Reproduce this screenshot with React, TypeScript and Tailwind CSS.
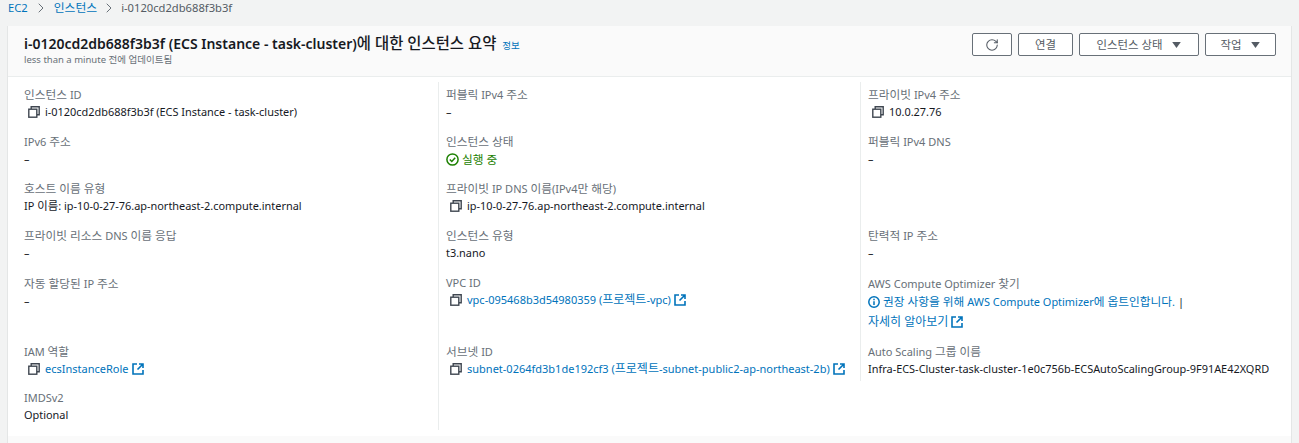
import React from 'react';
import { ChevronRight, RotateCw } from 'lucide-react';

const FONT = 'font-["Noto_Sans","Noto_Sans_CJK_KR",sans-serif]';

// hangul runs are set a bit larger than the latin text around them
const T = ({ text, ko = 'text-[11.7px]' }: { text: string; ko?: string }) => (
  <span>
    {text.split(/([가-힣]+(?: [가-힣]+)*)/).map((part, i) =>
      i % 2 === 1 ? <span key={i} className={ko}>{part}</span> : part
    )}
  </span>
);

const CopyIcon = () => (
  <svg width="12" height="12" viewBox="0 0 12 12" fill="none" stroke="#3f4650" strokeWidth="1.4" className="shrink-0">
    <rect x="0.8" y="3.2" width="8" height="8" />
    <path d="M3.2 3V0.8H11.2V8.8H9" />
  </svg>
);

const ExternalIcon = () => (
  <svg width="12" height="12" viewBox="0 0 12 12" fill="none" stroke="#0073bb" strokeWidth="1.6" className="ml-[3px] shrink-0">
    <path d="M5 1H1V11H11V7" />
    <path d="M7 1H11V5M11 1L5.5 6.5" />
  </svg>
);

const Field = ({ label, h, children }: { label: string; h: string; children: React.ReactNode }) => (
  <div className={h}>
    <div className="text-[11px] leading-[16px] text-[#687078]"><T text={label} /></div>
    <div className="mt-[1px] flex items-center text-[10.93px] leading-[16px] text-[#16191f]">{children}</div>
  </div>
);

const Copy = ({ children }: { children: React.ReactNode }) => (
  <>
    <span className="ml-[4px] mr-[5px]"><CopyIcon /></span>
    {children}
  </>
);

const Link = ({ text }: { text: string }) => (
  <span className="flex items-center text-[11px] text-[#0073bb]">
    <T text={text} ko="text-[12px]" />
    <ExternalIcon />
  </span>
);

const Btn = ({ className, children }: { className: string; children: React.ReactNode }) => (
  <div className={`flex h-[23px] items-center justify-center gap-[10px] rounded-[2px] border border-[#687078] bg-white text-[11.4px] text-[#545b64] ${className}`}>
    {children}
  </div>
);

const Caret = () => (
  <svg width="9" height="6" viewBox="0 0 10 7" fill="#545b64"><path d="M0 0H10L5 7Z" /></svg>
);

export default function App() {
  return (
    <div className={`h-[443px] w-[1299px] overflow-hidden bg-[#f2f3f3] ${FONT}`}>
      <div className="flex h-[26px] items-start pl-2 text-[11.2px] leading-[15px]">
        <span className="text-[#0073bb]">EC2</span>
        <ChevronRight className="mx-[5px] h-[16px] w-[16px] text-[#687078]" strokeWidth={1.5} />
        <span className="text-[11.8px] text-[#0073bb]">인스턴스</span>
        <ChevronRight className="mx-[4px] h-[16px] w-[16px] text-[#687078]" strokeWidth={1.5} />
        <span className="text-[#545b64]">i-0120cd2db688f3b3f</span>
      </div>

      <div className="ml-[7px] w-[1285px] border-x border-[#e4e6e6] bg-white">
        <div className="flex h-[51px] items-start justify-between border-b border-[#eaeded] bg-[#fafafa] pl-[16px] pr-[15px]">
          <div className="pt-[8px]">
            <div className="flex items-baseline">
              <span className="text-[14px] leading-[20px] font-semibold text-[#16191f]">
                <T text="i-0120cd2db688f3b3f (ECS Instance - task-cluster)에 대한 인스턴스 요약" ko="text-[15.4px] font-medium" />
              </span>
              <span className="ml-[6px] text-[9.5px] text-[#0073bb]">정보</span>
            </div>
            <div className="-mt-[1px] text-[9.5px] leading-[14px] text-[#687078]">less than a minute 전에 업데이트됨</div>
          </div>
          <div className="flex gap-[6px] pt-[7px]">
            <Btn className="w-[40px]"><RotateCw className="h-[14px] w-[14px]" strokeWidth={1.8} /></Btn>
            <Btn className="w-[55px]">연결</Btn>
            <Btn className="w-[120px]">인스턴스 상태 <Caret /></Btn>
            <Btn className="w-[71px]">작업 <Caret /></Btn>
          </div>
        </div>

        <div className="flex h-[359px] items-stretch pt-[5px]">
          <div className="w-[430px] pl-[16px] pt-[4px]">
            <Field label="인스턴스 ID" h="h-[47px]"><Copy>i-0120cd2db688f3b3f (ECS Instance - task-cluster)</Copy></Field>
            <Field label="IPv6 주소" h="h-[47px]">–</Field>
            <Field label="호스트 이름 유형" h="h-[47px]"><T text="IP 이름: ip-10-0-27-76.ap-northeast-2.compute.internal" ko="text-[11.4px]" /></Field>
            <Field label="프라이빗 리소스 DNS 이름 응답" h="h-[48px]">–</Field>
            <Field label="자동 할당된 IP 주소" h="h-[68px]">–</Field>
            <Field label="IAM 역할" h="h-[47px]"><Copy><Link text="ecsInstanceRole" /></Copy></Field>
            <Field label="IMDSv2" h="h-[40px]">Optional</Field>
          </div>

          <div className="mb-[6px] w-[422px] border-l border-[#eaeded] pl-[7px] pt-[4px]">
            <Field label="퍼블릭 IPv4 주소" h="h-[47px]">–</Field>
            <Field label="인스턴스 상태" h="h-[47px]">
              <svg width="13" height="13" viewBox="0 0 13 13" fill="none" stroke="#1d8102" strokeWidth="1.5" className="mr-[3px]">
                <circle cx="6.5" cy="6.5" r="5.6" />
                <path d="M3.8 6.5L5.8 8.5L9.2 4.8" />
              </svg>
              <span className="text-[#1d8102]"><T text="실행 중" /></span>
            </Field>
            <Field label="프라이빗 IP DNS 이름(IPv4만 해당)" h="h-[47px]"><Copy>ip-10-0-27-76.ap-northeast-2.compute.internal</Copy></Field>
            <Field label="인스턴스 유형" h="h-[48px]">t3.nano</Field>
            <Field label="VPC ID" h="h-[68px]"><Copy><Link text="vpc-095468b3d54980359 (프로젝트-vpc)" /></Copy></Field>
            <Field label="서브넷 ID" h="h-[47px]"><Copy><Link text="subnet-0264fd3b1de192cf3 (프로젝트-subnet-public2-ap-northeast-2b)" /></Copy></Field>
          </div>

          <div className="h-[299px] flex-1 border-l border-[#eaeded] pl-[7px] pt-[4px]">
            <Field label="프라이빗 IPv4 주소" h="h-[47px]"><Copy>10.0.27.76</Copy></Field>
            <Field label="퍼블릭 IPv4 DNS" h="h-[94px]">–</Field>
            <Field label="탄력적 IP 주소" h="h-[48px]">–</Field>
            <div className="h-[68px]">
              <div className="text-[11px] leading-[16px] text-[#687078]"><T text="AWS Compute Optimizer 찾기" /></div>
              <div className="mt-[1px] flex items-center text-[10.93px] leading-[16px] text-[#0073bb]">
                <svg width="12" height="12" viewBox="0 0 12 12" className="mr-[3px]" fill="none" stroke="#0073bb" strokeWidth="1.5">
                  <circle cx="6" cy="6" r="5.2" />
                  <path d="M6 5.2V9M6 2.8V4.2" />
                </svg>
                <T text="권장 사항을 위해 AWS Compute Optimizer에 옵트인합니다." />
                <span className="ml-[3px] text-[#16191f]">|</span>
              </div>
              <div className="mt-[4px] flex text-[10.93px] leading-[16px]"><Link text="자세히 알아보기" /></div>
            </div>
            <Field label="Auto Scaling 그룹 이름" h="h-[39px]">Infra-ECS-Cluster-task-cluster-1e0c756b-ECSAutoScalingGroup-9F91AE42XQRD</Field>
          </div>
        </div>

        <div className="h-[8px] bg-[#fafafa]" />
      </div>
    </div>
  );
}
